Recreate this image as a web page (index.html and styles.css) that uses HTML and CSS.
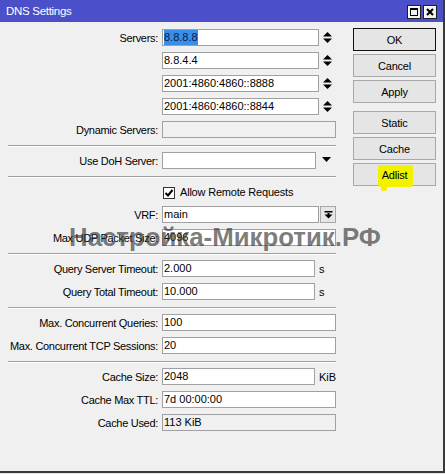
FILE: index.html
```html
<!DOCTYPE html>
<html>
<head>
<meta charset="utf-8">
<link rel="stylesheet" href="styles.css">
</head>
<body>
<div class="window">
  <div class="titlebar">
    <span class="title">DNS Settings</span>
    <div class="tb-btns">
      <span class="tb-btn"><svg width="10" height="10" viewBox="0 0 10 10"><rect x="1.5" y="1.5" width="7" height="7" fill="none" stroke="#000" stroke-width="1"/><rect x="1" y="1" width="8" height="2" fill="#000"/></svg></span>
      <span class="tb-btn"><svg width="10" height="10" viewBox="0 0 10 10"><path d="M2 2 L8 8 M8 2 L2 8" stroke="#000" stroke-width="2" fill="none"/></svg></span>
    </div>
  </div>
  <div class="main">
    <div class="form">
      <div class="row"><span class="label">Servers:</span><span class="field w-spin"><span class="sel">8.8.8.8</span></span><span class="spin-cell"><svg class="spin" width="9" height="11" viewBox="0 0 9 11"><polygon points="0,4.5 4.5,0 9,4.5" fill="#000"/><polygon points="0,6.5 4.5,11 9,6.5" fill="#000"/></svg></span></div>
      <div class="row"><span class="label"></span><span class="field w-spin">8.8.4.4</span><span class="spin-cell"><svg class="spin" width="9" height="11" viewBox="0 0 9 11"><polygon points="0,4.5 4.5,0 9,4.5" fill="#000"/><polygon points="0,6.5 4.5,11 9,6.5" fill="#000"/></svg></span></div>
      <div class="row"><span class="label"></span><span class="field w-spin">2001:4860:4860::8888</span><span class="spin-cell"><svg class="spin" width="9" height="11" viewBox="0 0 9 11"><polygon points="0,4.5 4.5,0 9,4.5" fill="#000"/><polygon points="0,6.5 4.5,11 9,6.5" fill="#000"/></svg></span></div>
      <div class="row"><span class="label"></span><span class="field w-spin">2001:4860:4860::8844</span><span class="spin-cell"><svg class="spin" width="9" height="11" viewBox="0 0 9 11"><polygon points="0,4.5 4.5,0 9,4.5" fill="#000"/><polygon points="0,6.5 4.5,11 9,6.5" fill="#000"/></svg></span></div>
      <div class="row"><span class="label">Dynamic Servers:</span><span class="field w-full disabled"></span></div>
      <div class="sep"></div>
      <div class="row"><span class="label">Use DoH Server:</span><span class="field w-doh"></span><span class="drop-cell"><svg width="9" height="5" viewBox="0 0 9 5"><polygon points="0,0 9,0 4.5,5" fill="#000"/></svg></span></div>
      <div class="sep"></div>
      <div class="row"><span class="label"></span><span class="check"><svg width="10" height="10" viewBox="0 0 10 10"><path d="M1.5 5 L4 7.5 L8.5 2" stroke="#000" stroke-width="2" fill="none"/></svg></span><span class="check-label">Allow Remote Requests</span></div>
      <div class="row"><span class="label">VRF:</span><span class="field w-spin">main</span><span class="vrf-btn"><svg width="9" height="8" viewBox="0 0 9 8"><rect x="0.5" y="0" width="8" height="1.5" fill="#000"/><rect x="3.5" y="2" width="2" height="2" fill="#000"/><polygon points="0.5,3.5 8.5,3.5 4.5,7.5" fill="#000"/></svg></span></div>
      <div class="row"><span class="label">Max UDP Packet Size:</span><span class="field w-full">4096</span></div>
      <div class="sep"></div>
      <div class="row"><span class="label">Query Server Timeout:</span><span class="field w-unit">2.000</span><span class="unit">s</span></div>
      <div class="row"><span class="label">Query Total Timeout:</span><span class="field w-unit">10.000</span><span class="unit">s</span></div>
      <div class="sep"></div>
      <div class="row"><span class="label">Max. Concurrent Queries:</span><span class="field w-full">100</span></div>
      <div class="row"><span class="label">Max. Concurrent TCP Sessions:</span><span class="field w-full">20</span></div>
      <div class="sep"></div>
      <div class="row"><span class="label">Cache Size:</span><span class="field w-unit">2048</span><span class="unit">KiB</span></div>
      <div class="row"><span class="label">Cache Max TTL:</span><span class="field w-full">7d 00:00:00</span></div>
      <div class="row"><span class="label">Cache Used:</span><span class="field w-full disabled">113 KiB</span></div>
    </div>
    <div class="buttons">
      <div class="btn default">OK</div>
      <div class="btn">Cancel</div>
      <div class="btn">Apply</div>
      <div class="btn gap">Static</div>
      <div class="btn">Cache</div>
      <div class="btn marked"><span class="hl"></span><span class="btn-text">Adlist</span></div>
    </div>
  </div>
  <div class="watermark">Настройка-Микротик.РФ</div>
</div>
</body>
</html>
```
FILE: styles.css
```css
* { box-sizing: border-box; }
html { background: #e6e6e6; }
body {
  margin: 0;
  font-family: "Liberation Sans", Arial, sans-serif;
  font-size: 11px;
  color: #000;
}
.window {
  width: 445px;
  height: 473px;
  background: #f0f0f0;
  border-right: 2px solid #3a3a3a;
  border-bottom: 2px solid #3a3a3a;
  position: relative;
  overflow: hidden;
}
.titlebar {
  height: 22px;
  background: #4b4fc9;
  display: flex;
  align-items: center;
  padding: 0 6px 0 6px;
  color: #fff;
}
.title {
  flex: 1;
  letter-spacing: -0.3px;
  font-size: 11.5px;
}
.tb-btns {
  display: flex;
  gap: 2px;
  margin-top: 1px;
}
.tb-btn {
  width: 14px;
  height: 14px;
  background: #f0f0f0;
  border: 1px solid #1e1e1e;
  box-shadow: inset 1px 1px 0 #fff;
  display: flex;
  align-items: center;
  justify-content: center;
}
.main {
  display: flex;
  padding-top: 6px;
}
.form {
  width: 336px;
  margin-top: 1px;
  display: flex;
  flex-direction: column;
  gap: 6px;
}
.row {
  display: flex;
  align-items: center;
  height: 17px;
}
.label {
  width: 158px;
  margin-right: 4px;
  text-align: right;
  white-space: nowrap;
  letter-spacing: -0.3px;
  flex: none;
}
.field {
  height: 17px;
  background: #fff;
  border: 1px solid #a0a0a0;
  padding: 0 1px;
  line-height: 15px;
  white-space: nowrap;
  overflow: hidden;
  flex: none;
}
.field.disabled { background: #f0f0f0; }
.w-full { width: 174px; }
.w-spin { width: 157px; }
.w-doh { width: 154px; }
.w-unit { width: 153px; }
.sel {
  display: inline-block;
  background: #3a8ee8;
  color: #0b1a4a;
  line-height: 15px;
  height: 15px;
}
.spin-cell {
  width: 20px;
  display: flex;
  justify-content: center;
}
.drop-cell {
  width: 26px;
  display: flex;
  justify-content: center;
  margin-top: -3px;
}
.vrf-btn {
  width: 16px;
  height: 17px;
  margin-left: 1px;
  background: #e5e5e5;
  border: 1px solid #a8a8a8;
  display: flex;
  align-items: center;
  justify-content: center;
}
.unit {
  margin-left: 4px;
}
.check {
  width: 12px;
  height: 12px;
  margin-left: 1px;
  margin-top: 2px;
  background: #fff;
  border: 1px solid #333;
  display: flex;
  align-items: center;
  justify-content: center;
}
.check-label {
  margin-left: 5px;
  letter-spacing: -0.2px;
}
.sep {
  margin: 1px 0 -1px 8px;
  width: 328px;
  height: 2px;
  border-top: 1px solid #a0a0a0;
  border-bottom: 1px solid #fff;
}
.buttons {
  margin-left: 17px;
  width: 83px;
  display: flex;
  flex-direction: column;
  gap: 3px;
}
.btn {
  height: 23px;
  background: #e5e5e5;
  border: 1px solid #a8a8a8;
  display: flex;
  align-items: center;
  justify-content: center;
  letter-spacing: -0.2px;
  position: relative;
}
.btn.default { border-color: #111; }
.btn.gap { margin-top: 5px; }
.hl {
  position: absolute;
  left: 24px;
  top: 1px;
  width: 35px;
  height: 22px;
  background: #f2f200;
  border-radius: 2px 3px 2px 2px;
}
.hl::after {
  content: "";
  position: absolute;
  left: 3px;
  bottom: -4px;
  width: 6px;
  height: 5px;
  background: #f2f200;
  border-radius: 0 0 2px 2px;
}
.btn-text { position: relative; }
.watermark {
  position: absolute;
  left: 69px;
  top: 224px;
  font-size: 25.8px;
  line-height: 26px;
  font-weight: bold;
  color: rgba(50, 50, 50, 0.65);
  white-space: nowrap;
  pointer-events: none;
}
```
